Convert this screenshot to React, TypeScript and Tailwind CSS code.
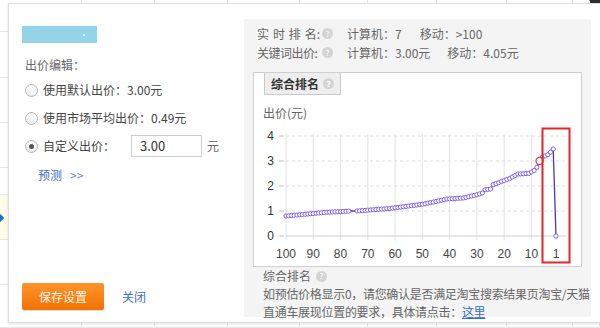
import React from "react";

const CJK = { fontFamily: '"Microsoft YaHei", "Noto Sans CJK SC", "Noto Sans", sans-serif' };

const COLS = [82, 73, 73, 72, 68, 69, 70, 66, 27];
const ROWS: { h: number; hi?: boolean }[] = [
  { h: 32 },
  { h: 46 },
  { h: 45 },
  { h: 45 },
  { h: 27 },
  { h: 45, hi: true },
  { h: 45 },
  { h: 43 },
];

const KEYS: [number, number][] = [
  [100, 0.8], [92, 0.88], [85, 0.95], [76, 1.0], [74, 1.0], [62, 1.1], [55, 1.2],
  [50, 1.27], [45, 1.38], [41, 1.48], [35, 1.52], [30, 1.65], [28, 1.72], [27, 1.85],
  [25, 1.88], [24, 2.05], [21, 2.18], [18, 2.3], [15, 2.48], [11, 2.5], [9, 2.62],
  [8, 2.75], [7, 3.0], [6, 3.15], [5, 3.2], [4, 3.25], [3, 3.35], [2, 3.48], [1, 0],
];

function valueAt(r: number) {
  for (let i = 0; i < KEYS.length - 1; i++) {
    const [r1, v1] = KEYS[i];
    const [r2, v2] = KEYS[i + 1];
    if (r <= r1 && r >= r2) {
      if (r1 === r2) return v1;
      return v1 + ((r1 - r) / (r1 - r2)) * (v2 - v1);
    }
  }
  return 0;
}

const xOf = (r: number) => 32 + (100 - r) * 2.727;
const yOf = (v: number) => 115 - 25 * v;

function Help() {
  return (
    <span className="inline-flex items-center justify-center w-[11px] h-[11px] rounded-full bg-[#d4d4d4] text-white text-[8px] leading-none align-middle">
      ?
    </span>
  );
}

function Radio({ checked }: { checked?: boolean }) {
  return (
    <span className="w-[13px] h-[13px] rounded-full border border-[#b5b5b5] bg-gradient-to-b from-white to-[#ececec] flex items-center justify-center shrink-0">
      {checked && <span className="w-[5px] h-[5px] rounded-full bg-[#555]" />}
    </span>
  );
}

function Chart() {
  const ranks = Array.from({ length: 100 }, (_, i) => 100 - i);
  const pts = ranks.map((r) => [xOf(r), yOf(valueAt(r))] as const);
  const line = pts.map(([x, y]) => `${x.toFixed(1)},${y.toFixed(1)}`).join(" ");
  const xticks = [100, 90, 80, 70, 60, 50, 40, 30, 20, 10];
  return (
    <svg width="327" height="145" className="block" style={{ fontFamily: '"Liberation Sans", Arial, sans-serif' }}>
      {[4, 3, 2, 1].map((v) => (
        <line key={v} x1={32} x2={312} y1={yOf(v)} y2={yOf(v)} stroke="#dcdcdc" strokeDasharray="3 3" />
      ))}
      {xticks.map((r) => (
        <line key={r} x1={xOf(r)} x2={xOf(r)} y1={13} y2={119} stroke="#e2e2e2" />
      ))}
      <line x1={xOf(1)} x2={xOf(1)} y1={115} y2={119} stroke="#ccc" />
      <line x1={32} x2={312} y1={115} y2={115} stroke="#cfcfcf" />
      {[4, 3, 2, 1, 0].map((v) => (
        <g key={v}>
          <line x1={25} x2={30} y1={yOf(v)} y2={yOf(v)} stroke="#bbb" />
          <text x={20} y={yOf(v) + 4} textAnchor="end" fontSize="12" fill="#333">
            {v}
          </text>
        </g>
      ))}
      {[...xticks, 1].map((r) => (
        <text key={r} x={xOf(r)} y={137} textAnchor="middle" fontSize="12" fill="#444">
          {r}
        </text>
      ))}
      <polyline points={line} fill="none" stroke="#4a32d0" strokeWidth="1.3" />
      {pts.map(([x, y], i) =>
        ranks[i] === 75 || ranks[i] === 76 || ranks[i] === 7 ? null : (
          <circle key={i} cx={x} cy={y} r={2.1} fill="white" stroke="#8062ec" strokeWidth="1" />
        )
      )}
      <circle cx={xOf(7)} cy={yOf(3.0)} r={3.6} fill="white" stroke="#e0303a" strokeWidth="1.2" />
      <rect x={288.5} y={7.5} width={27} height={134} fill="none" stroke="#e2272b" strokeWidth="2" />
    </svg>
  );
}

export default function App() {
  return (
    <div className="relative w-[600px] h-[328px] overflow-hidden bg-white" style={CJK}>
      {/* page table behind the dialog */}
      <div className="flex flex-col">
        {ROWS.map((row, i) => (
          <div
            key={i}
            className={`flex border-b border-[#e6e6e6] ${row.hi ? "bg-[#fffbe8]" : ""}`}
            style={{ height: row.h }}
          >
            {COLS.map((w, j) => (
              <div key={j} className="border-r border-[#e6e6e6] shrink-0 relative" style={{ width: w }}>
                {row.hi && j === 0 && (
                  <span className="absolute left-[-3px] top-[20px] w-[6px] h-[6px] rotate-45 bg-[#1f6fd0]" />
                )}
              </div>
            ))}
          </div>
        ))}
      </div>

      {/* close button corner */}
      <span className="absolute right-[-15px] top-[-16px] w-[26px] h-[26px] rounded-full bg-[#2e2e2e] shadow" />

      {/* dialog */}
      <div className="absolute left-[8px] top-[3px] w-[600px] h-[320px] bg-white border border-[#dedede] shadow-[0_1px_3px_rgba(0,0,0,0.12)] flex">
        <div className="w-[235px] shrink-0 flex flex-col pl-[13px] pt-[22px] pb-[12px] text-[12px]">
          <div className="w-[75px] h-[17px] bg-[#94d4e8] flex items-center justify-end pr-[12px]">
            <span className="w-[2px] h-[2px] bg-white/70" />
          </div>
          <div className="mt-[13px] ml-[3px] leading-[18px] text-[#666]">出价编辑：</div>
          <div className="h-[28px] mt-[2px] ml-[3px] flex items-center gap-[5px] text-[#444]">
            <Radio />
            <span>使用默认出价：3.00元</span>
          </div>
          <div className="h-[28px] ml-[3px] flex items-center gap-[5px] text-[#444]">
            <Radio />
            <span>使用市场平均出价：0.49元</span>
          </div>
          <div className="h-[28px] ml-[3px] flex items-center text-[#444]">
            <Radio checked />
            <span className="ml-[5px]">自定义出价：</span>
            <span className="ml-[16px] w-[71px] h-[22px] border border-[#cfcfcf] flex items-center pl-[8px] text-[13px] text-[#333]">
              3.00
            </span>
            <span className="ml-[5px] text-[#666]">元</span>
          </div>
          <div className="mt-[6px] ml-[16px] leading-[18px]">
            <span className="text-[#3f6fc4]">预测</span>
            <span className="ml-[8px] text-[#6a86b8]">&gt;&gt;</span>
          </div>
          <div className="mt-auto flex items-center">
            <button className="w-[82px] h-[27px] rounded-[2px] bg-gradient-to-b from-[#ff9428] to-[#f27200] text-[#fff3e6] text-[12px] shadow-[0_1px_1px_rgba(0,0,0,0.15)]">
              保存设置
            </button>
            <span className="ml-[18px] text-[#3f6fc4]">关闭</span>
          </div>
        </div>

        <div className="mt-[15px] w-[347px] h-[298px] bg-[#f4f4f4] flex flex-col text-[12px] text-[#666]">
          <div className="pl-[13px] pt-[5px] leading-[19px] whitespace-nowrap">
            <div className="flex items-center">
              <span className="w-[63px] flex justify-between">
                <span>实</span>
                <span>时</span>
                <span>排</span>
                <span>名:</span>
              </span>
              <span className="ml-[2px] flex">
                <Help />
              </span>
              <span className="ml-[14px]">计算机：7</span>
              <span className="ml-[18px]">移动：&gt;100</span>
            </div>
            <div className="flex items-center">
              <span className="w-[63px] tracking-[-0.5px]">关键词出价:</span>
              <span className="ml-[2px] flex">
                <Help />
              </span>
              <span className="ml-[14px]">计算机：3.00元</span>
              <span className="ml-[17px]">移动：4.05元</span>
            </div>
          </div>

          <div className="mx-[9px] mt-[10px] h-[199px] bg-white border border-[#cfcfcf] flex flex-col">
            <div className="ml-[10px] w-[77px] h-[22px] bg-[#eeeeee] border border-t-0 border-[#c9c9c9] flex items-center justify-center gap-[4px] text-[#333] font-bold">
              <span>综合排名</span>
              <Help />
            </div>
            <div className="ml-[9px] mt-[10px] leading-[16px] text-[#666]">出价(元)</div>
            <Chart />
          </div>

          <div className="pl-[19px] leading-[18px] whitespace-nowrap">
            <div className="flex items-center gap-[5px]">
              <span>综合排名</span>
              <Help />
            </div>
            <div className="tracking-[-0.3px]">如预估价格显示0，请您确认是否满足淘宝搜索结果页淘宝/天猫</div>
            <div className="tracking-[-0.3px]">
              直通车展现位置的要求，具体请点击：<span className="text-[#2f6fcc] underline">这里</span>
            </div>
          </div>
        </div>
      </div>
    </div>
  );
}
